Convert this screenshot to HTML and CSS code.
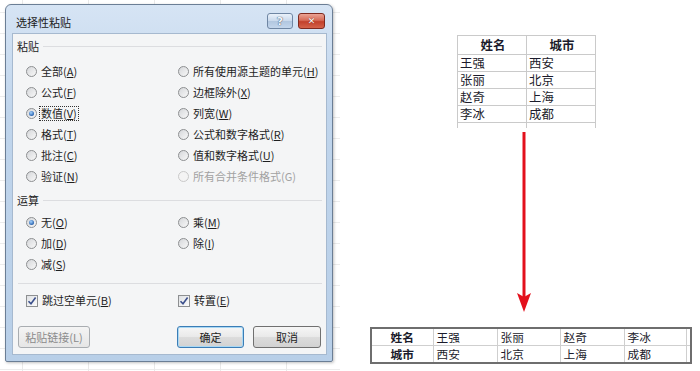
FILE: index.html
```html
<!DOCTYPE html>
<html lang="zh-CN">
<head>
    <meta charset="UTF-8">
    <title>选择性粘贴</title>
    <link rel="stylesheet" href="styles.css">
</head>
<body>
<div class="page">
    <div class="sheet">
        <div class="dialog">
            <div class="titlebar">
                <span class="title">选择性粘贴</span>
                <span class="tb-btn help">?</span>
                <span class="tb-btn close">✕</span>
            </div>
            <div class="panel">
                <div class="group-title"><span>粘贴</span><i class="rule"></i></div>
                <div class="options">
                    <div class="opt"><span class="radio"></span>全部(<u>A</u>)</div>
                    <div class="opt"><span class="radio"></span>所有使用源主题的单元(<u>H</u>)</div>
                    <div class="opt"><span class="radio"></span>公式(<u>F</u>)</div>
                    <div class="opt"><span class="radio"></span>边框除外(<u>X</u>)</div>
                    <div class="opt"><span class="radio on"></span><span class="focus">数值(<u>V</u>)</span></div>
                    <div class="opt"><span class="radio"></span>列宽(<u>W</u>)</div>
                    <div class="opt"><span class="radio"></span>格式(<u>T</u>)</div>
                    <div class="opt"><span class="radio"></span>公式和数字格式(<u>R</u>)</div>
                    <div class="opt"><span class="radio"></span>批注(<u>C</u>)</div>
                    <div class="opt"><span class="radio"></span>值和数字格式(<u>U</u>)</div>
                    <div class="opt"><span class="radio"></span>验证(<u>N</u>)</div>
                    <div class="opt disabled"><span class="radio"></span>所有合并条件格式(G)</div>
                </div>
                <div class="group-title op"><span>运算</span><i class="rule"></i></div>
                <div class="options">
                    <div class="opt"><span class="radio on"></span>无(<u>O</u>)</div>
                    <div class="opt"><span class="radio"></span>乘(<u>M</u>)</div>
                    <div class="opt"><span class="radio"></span>加(<u>D</u>)</div>
                    <div class="opt"><span class="radio"></span>除(<u>I</u>)</div>
                    <div class="opt"><span class="radio"></span>减(<u>S</u>)</div>
                    <div class="opt"></div>
                </div>
                <div class="separator"></div>
                <div class="options checks">
                    <div class="opt"><span class="check"><svg width="10" height="10" viewBox="0 0 10 10"><path d="M1.5 5.2 L4 7.8 L8.6 1.6" fill="none" stroke="#3b4f8c" stroke-width="1.6"/></svg></span>跳过空单元(<u>B</u>)</div>
                    <div class="opt"><span class="check"><svg width="10" height="10" viewBox="0 0 10 10"><path d="M1.5 5.2 L4 7.8 L8.6 1.6" fill="none" stroke="#3b4f8c" stroke-width="1.6"/></svg></span>转置(<u>E</u>)</div>
                </div>
                <div class="buttons">
                    <span class="btn link">粘贴链接(L)</span>
                    <span class="btn ok">确定</span>
                    <span class="btn cancel">取消</span>
                </div>
            </div>
        </div>
    </div>

    <div class="result">
        <table class="src-table">
            <tr><th>姓名</th><th>城市</th></tr>
            <tr><td>王强</td><td>西安</td></tr>
            <tr><td>张丽</td><td>北京</td></tr>
            <tr><td>赵奇</td><td>上海</td></tr>
            <tr><td>李冰</td><td>成都</td></tr>
            <tr class="tail"><td></td><td></td></tr>
        </table>

        <svg class="arrow" width="16" height="180" viewBox="0 0 16 180">
            <line x1="8" y1="0" x2="8" y2="166" stroke="#e3101c" stroke-width="3"/>
            <polygon points="1,161 8,165 15,161 8,180" fill="#e3101c"/>
        </svg>

        <table class="dst-table">
            <colgroup>
                <col class="c-head">
                <col class="c-wide">
                <col class="c-mid">
                <col class="c-wide">
                <col class="c-head">
                <col class="c-edge">
            </colgroup>
            <tr><th>姓名</th><td>王强</td><td>张丽</td><td>赵奇</td><td>李冰</td><td class="edge"></td></tr>
            <tr><th>城市</th><td>西安</td><td>北京</td><td>上海</td><td>成都</td><td class="edge"></td></tr>
        </table>
    </div>
</div>
</body>
</html>
```

FILE: styles.css
```css
html, body {
    margin: 0;
    padding: 0;
    background-color: #fff;
}

body {
    font-family: "Noto Sans CJK SC", "Noto Sans", sans-serif;
    color: #1e1e1e;
}

.page {
    display: flex;
    width: 700px;
    height: 371px;
    overflow: hidden;
}

/* spreadsheet behind the dialog */
.sheet {
    width: 340px;
    height: 371px;
    flex-shrink: 0;
    background-image:
        linear-gradient(to right, #e9e9e9 1px, transparent 1px),
        linear-gradient(to bottom, #ececec 1px, transparent 1px);
    background-size: 66px 100%, 100% 21px;
    background-position: 22px 0, 0 12px;
    padding-top: 4px;
    padding-left: 5px;
    box-sizing: border-box;
}

.dialog {
    width: 328px;
    height: 358px;
    box-sizing: border-box;
    border: 1px solid #6b7e95;
    border-radius: 6px 6px 2px 2px;
    background: linear-gradient(#d6e4f4, #c0d5ec 30%, #b8cfe8);
    padding: 0 5px 6px 6px;
    display: flex;
    flex-direction: column;
    box-shadow: 1px 1px 3px rgba(0, 0, 0, 0.25);
}

.titlebar {
    height: 28px;
    display: flex;
    align-items: flex-start;
    flex-shrink: 0;
}

.title {
    font-size: 11px;
    line-height: 14px;
    padding: 10px 0 0 4px;
    flex: 1;
    color: #1b1b1b;
}

.tb-btn {
    margin-top: 8px;
    height: 16px;
    box-sizing: border-box;
    border-radius: 3px;
    display: flex;
    align-items: center;
    justify-content: center;
    font-family: "DejaVu Sans", sans-serif;
    font-weight: bold;
}

.help {
    width: 26px;
    border: 1px solid #6f86a3;
    background: linear-gradient(#eaf1fa, #c9d9ec 50%, #b1c6df 51%, #c3d6ec);
    color: #f4f7fb;
    font-size: 11px;
    text-shadow: 0 0 1px #3e536e, 0 0 1px #3e536e;
}

.close {
    width: 27px;
    margin-left: 5px;
    margin-right: 2px;
    border: 1px solid #7e2a20;
    background: linear-gradient(#eba394, #d66c58 45%, #c2402b 55%, #d5634a);
    color: #fff;
    font-size: 9px;
    text-shadow: 0 0 1px #5a1a12;
}

.panel {
    flex: 1;
    box-sizing: border-box;
    border: 1px solid #a6b9cf;
    background-color: #f4f5f6;
    font-size: 11px;
}

.group-title {
    height: 24px;
    display: flex;
    align-items: center;
    padding: 0 4px 0 4px;
}

.group-title.op {
    margin-top: 1px;
}

.group-title .rule {
    flex: 1;
    height: 1px;
    background-color: #dcdde0;
    margin-left: 4px;
}

.options {
    display: grid;
    grid-template-columns: 152px 1fr;
    grid-auto-rows: 21px;
    padding-left: 13px;
}

.group-title + .options {
    margin-top: 3px;
}

.group-title.op + .options {
    margin-top: 0;
}

.opt {
    display: flex;
    align-items: center;
    white-space: nowrap;
    line-height: 13px;
}

.opt u {
    text-decoration: underline;
    text-underline-offset: 1px;
}

.opt.disabled {
    color: #a2a2a2;
}

.opt.disabled .radio {
    border-color: #c9c9c9;
    background: #f4f4f4;
}

.radio {
    width: 11px;
    height: 11px;
    box-sizing: border-box;
    border-radius: 50%;
    border: 1px solid #8d8f91;
    background: linear-gradient(135deg, #d5d7da, #f8f8f8);
    margin-right: 4px;
    flex-shrink: 0;
    display: flex;
    align-items: center;
    justify-content: center;
}

.radio.on::after {
    content: "";
    width: 5px;
    height: 5px;
    border-radius: 50%;
    background: radial-gradient(circle at 40% 35%, #a6d4ff, #2a64b0 70%, #173f7a);
}

.focus {
    outline: 1px dotted #333;
    outline-offset: 0;
    padding: 0 1px;
    margin-left: -1px;
}

.separator {
    height: 1px;
    background-color: #dcdde0;
    margin: 8px 4px 0 5px;
}

.options.checks {
    margin-top: 6px;
}

.check {
    width: 12px;
    height: 12px;
    box-sizing: border-box;
    border: 1px solid #8d8f91;
    background: linear-gradient(135deg, #dfe1e4, #fbfbfb);
    margin-right: 4px;
    flex-shrink: 0;
    display: flex;
    align-items: center;
    justify-content: center;
}

.buttons {
    display: flex;
    margin-top: 15px;
    padding: 0 5px;
    gap: 9px;
}

.btn {
    height: 22px;
    box-sizing: border-box;
    border: 1px solid #707070;
    border-radius: 3px;
    background: linear-gradient(#f6f6f6, #e9e9e9 50%, #dcdcdc 51%, #d2d2d2);
    display: flex;
    align-items: center;
    justify-content: center;
    font-size: 11px;
}

.btn.link {
    width: 72px;
    color: #8b8b8b;
    border-color: #a9adb1;
    background: linear-gradient(#f4f4f4, #e6e6e6);
    margin-right: auto;
}

.btn.ok {
    width: 67px;
    border-color: #3b7db6;
    box-shadow: inset 0 0 0 1px #a9d8f4;
}

.btn.cancel {
    width: 68px;
}

/* right side: source data, arrow, transposed result */
.result {
    display: flex;
    flex-direction: column;
    align-items: flex-start;
    width: 320px;
    margin-left: 30px;
}

.src-table {
    margin-top: 35px;
    margin-left: 87px;
    border-collapse: collapse;
    table-layout: fixed;
    width: 139px;
    font-size: 12.4px;
}

.src-table th,
.src-table td {
    width: 69px;
    height: 17px;
    padding: 0 0 0 2px;
    border: 1px solid #cacaca;
    line-height: 16px;
    text-align: left;
    font-weight: normal;
    color: #1b1b2b;
    box-sizing: border-box;
}

.src-table th {
    height: 19px;
    text-align: center;
    font-weight: bold;
}

.src-table .tail td {
    height: 5px;
    border-bottom: none;
}

.arrow {
    margin-top: 4px;
    margin-left: 146px;
    display: block;
}

.dst-table {
    margin-top: 15px;
    width: 320px;
    border-collapse: collapse;
    table-layout: fixed;
    border: 2px solid #6e6e6e;
    font-size: 11.7px;
}

.dst-table .c-head { width: 62px; }
.dst-table .c-wide { width: 64px; }
.dst-table .c-mid { width: 63px; }
.dst-table .c-edge { width: 5px; }

.dst-table th,
.dst-table td {
    height: 16px;
    padding: 0 0 0 3px;
    border: 1px solid #cfcfcf;
    line-height: 15px;
    text-align: left;
    color: #1b1b2b;
    overflow: hidden;
    white-space: nowrap;
}

.dst-table th {
    text-align: center;
    font-weight: bold;
    padding: 0;
}

.dst-table td.edge {
    padding: 0;
}
```
